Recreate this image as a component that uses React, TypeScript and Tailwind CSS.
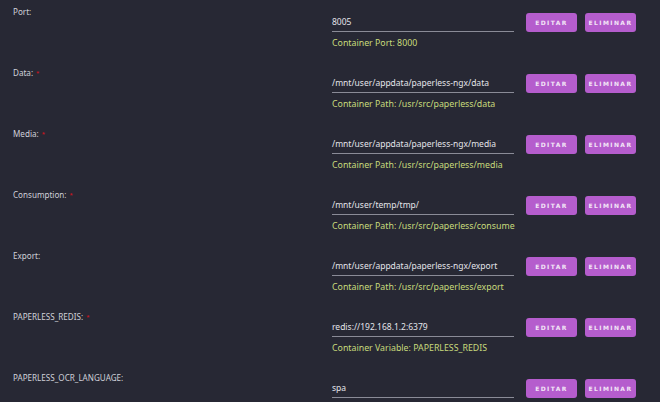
const ROWS = [
  { label: "Port:", required: false, value: "8005", help: "Container Port: 8000" },
  { label: "Data:", required: true, value: "/mnt/user/appdata/paperless-ngx/data", help: "Container Path: /usr/src/paperless/data" },
  { label: "Media:", required: true, value: "/mnt/user/appdata/paperless-ngx/media", help: "Container Path: /usr/src/paperless/media" },
  { label: "Consumption:", required: true, value: "/mnt/user/temp/tmp/", help: "Container Path: /usr/src/paperless/consume" },
  { label: "Export:", required: false, value: "/mnt/user/appdata/paperless-ngx/export", help: "Container Path: /usr/src/paperless/export" },
  { label: "PAPERLESS_REDIS:", required: true, value: "redis://192.168.1.2:6379", help: "Container Variable: PAPERLESS_REDIS" },
  { label: "PAPERLESS_OCR_LANGUAGE:", required: false, value: "spa", help: "Container Variable: PAPERLESS_OCR_LANGUAGE" },
]

function Btn({ children }: { children: string }) {
  return (
    <button className="w-[51px] h-[19px] rounded-[3px] bg-[#b55dcd] text-[#f3e6f7] text-[6px] font-bold tracking-[1.4px] uppercase flex items-center justify-center font-['DejaVu_Sans',sans-serif]">
      {children}
    </button>
  )
}

export default function App() {
  return (
    <div className="w-[660px] h-[402px] overflow-hidden bg-[#272834] font-['Noto_Sans',sans-serif]">
      {ROWS.map((r) => (
        <div key={r.label} className="flex h-[61px]">
          <div className="w-[332px] pl-[13px] pt-[6px] text-[8.1px] leading-[12px] text-[#cfd0d8] whitespace-nowrap">
            {r.label}
            {r.required && <span className="text-[#e0101a] ml-[3px] text-[6px] align-top">*</span>}
          </div>
          <div className="w-[182px] pt-[14px]">
            <div className="h-[18px] border-b border-[#8a8b97] text-[8.5px] text-[#e4e4ea] leading-[16px] whitespace-nowrap">{r.value}</div>
            <div className="mt-[5px] text-[8.8px] text-[#c8db7c] leading-[12px] whitespace-nowrap">{r.help}</div>
          </div>
          <div className="flex gap-[8px] pl-[12px] pt-[13px] items-start">
            <Btn>Editar</Btn>
            <Btn>Eliminar</Btn>
          </div>
        </div>
      ))}
    </div>
  )
}
